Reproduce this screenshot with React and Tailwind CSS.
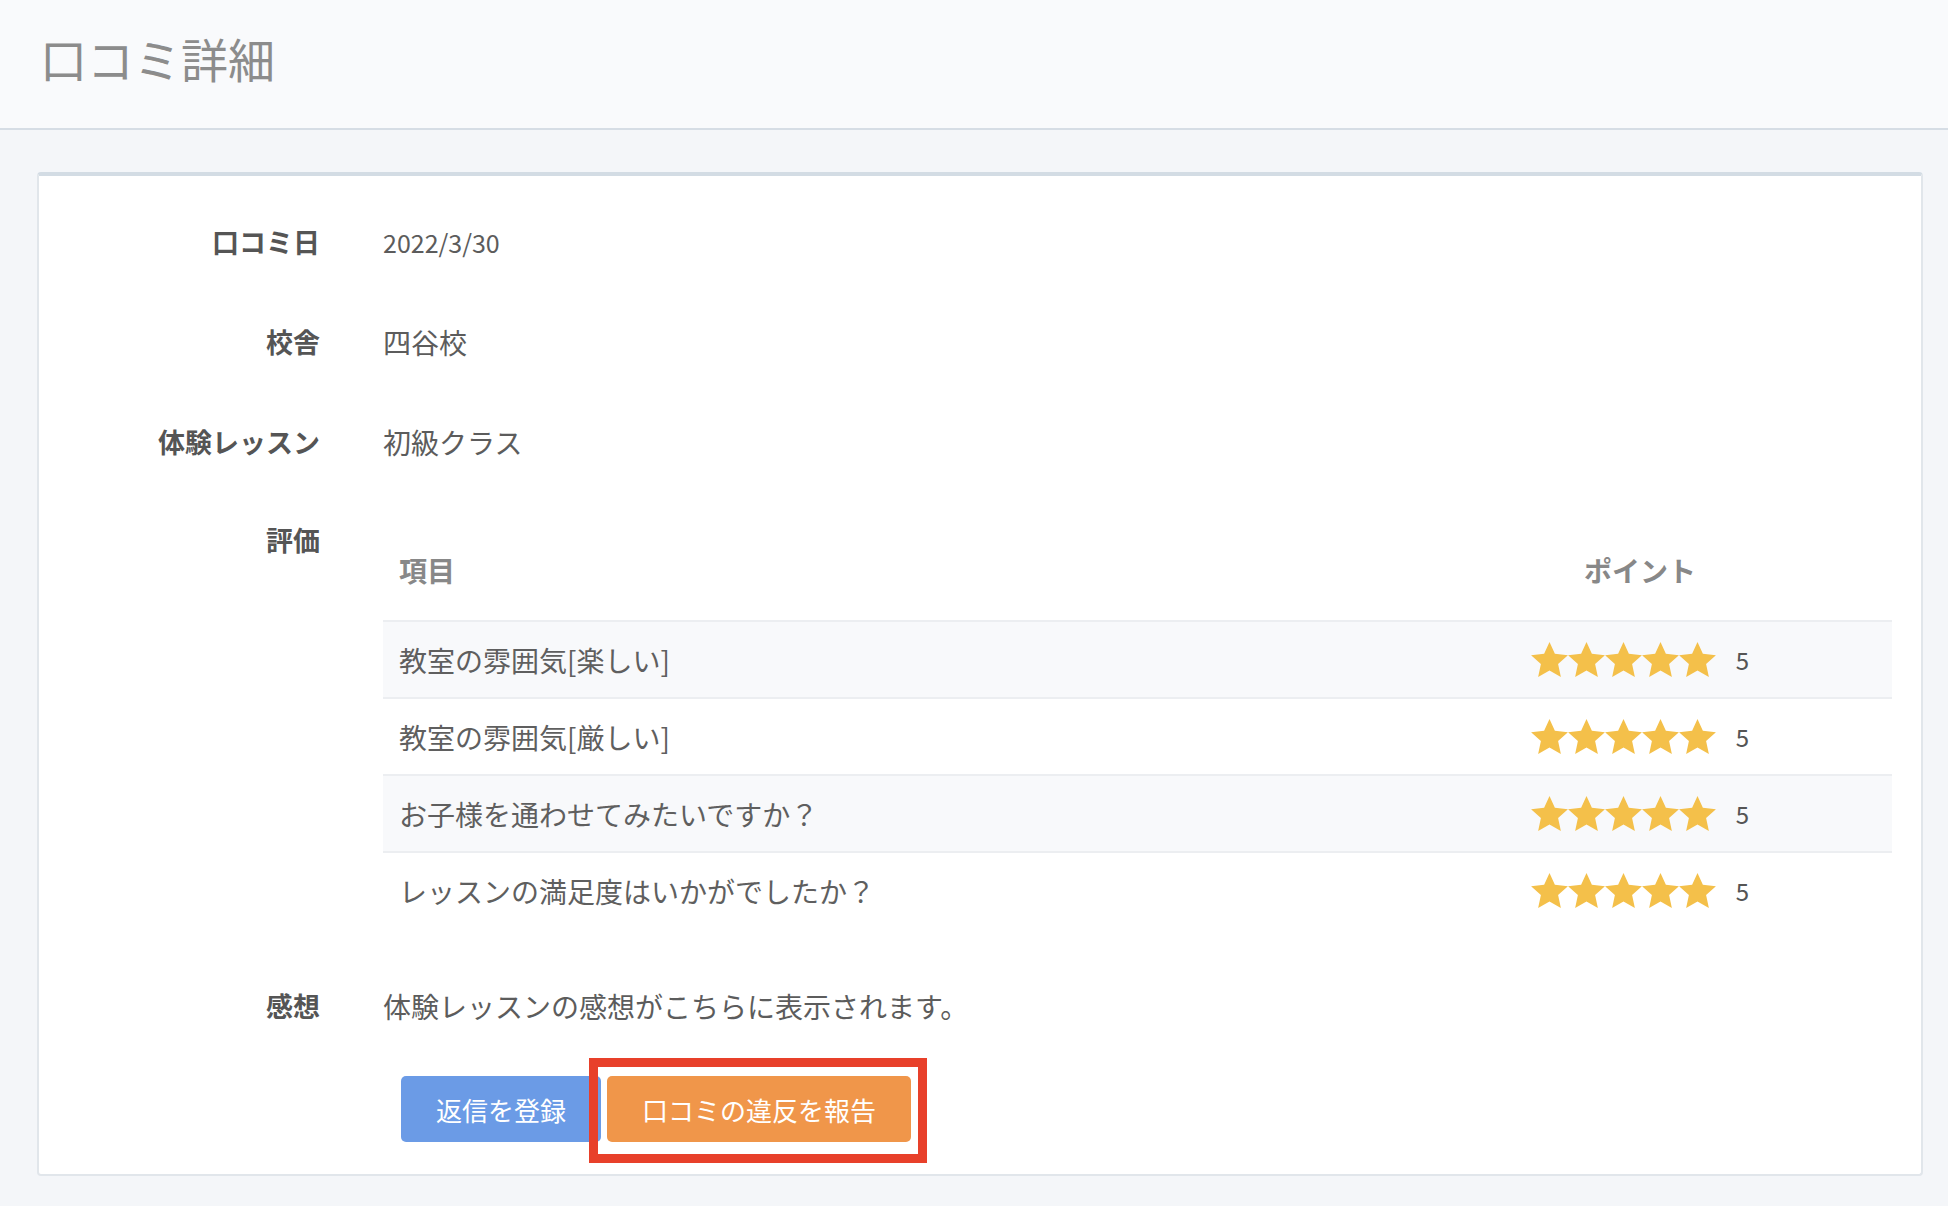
import React from "react";

const items = [
  { label: "教室の雰囲気[楽しい]", point: 5 },
  { label: "教室の雰囲気[厳しい]", point: 5 },
  { label: "お子様を通わせてみたいですか？", point: 5 },
  { label: "レッスンの満足度はいかがでしたか？", point: 5 },
];

function Star() {
  return (
    <svg width="37" height="35" viewBox="0 0 24 22.8" className="block">
      <polygon
        fill="#f4c04a"
        points="12,0 15.5,7.7 24,8.6 17.6,14.4 19.4,22.8 12,18.5 4.6,22.8 6.4,14.4 0,8.6 8.5,7.7"
      />
    </svg>
  );
}

function Row({ label, children, className = "", valueClass = "text-[28px]" }) {
  return (
    <div className={`flex ${className}`}>
      <div className="w-[281px] shrink-0 text-right text-[27px] font-bold leading-[40px] text-[#555]">
        {label}
      </div>
      <div className={`ml-[63px] flex-1 leading-[40px] text-[#5c5c5c] ${valueClass}`}>
        {children}
      </div>
    </div>
  );
}

export default function App() {
  return (
    <div className="min-h-screen bg-[#f4f6f9] pb-[33px] font-['Noto_Sans_CJK_JP','Noto_Sans',sans-serif]">
      <header className="flex h-[130px] items-center border-b-2 border-[#d6dde5] bg-[#f9fafc] pb-[14px] pl-[40px]">
        <h1 className="text-[47px] leading-none text-[#8c8c8c]">口コミ詳細</h1>
      </header>

      <div className="ml-[37px] mr-[25px] mt-[42px] rounded-[4px] border-2 border-t-4 border-[#e1e6eb] border-t-[#d3dce4] bg-white pb-[32px] pr-[29px] pt-[46px]">
        <Row label="口コミ日" valueClass="text-[25px]">
          2022/3/30
        </Row>
        <Row label="校舎" className="mt-[60px]">
          四谷校
        </Row>
        <Row label="体験レッスン" className="mt-[60px]">
          初級クラス
        </Row>

        <div className="mt-[58px] flex">
          <div className="w-[281px] shrink-0 text-right text-[27px] font-bold leading-[40px] text-[#555]">
            評価
          </div>
          <div className="ml-[63px] flex-1 text-[28px]">
            <div className="flex h-[100px] items-center font-bold text-[#888]">
              <div className="flex-1 pl-[16px]">項目</div>
              <div className="w-[504px] text-center">ポイント</div>
            </div>
            {items.map((item, i) => (
              <div
                key={item.label}
                className={`flex h-[77px] items-center border-t-2 border-[#eceef1] text-[#5f5f5f] ${
                  i % 2 === 0 ? "bg-[#f8f9fb]" : "bg-white"
                }`}
              >
                <div className="flex-1 pl-[16px]">{item.label}</div>
                <div className="flex w-[504px] items-center justify-center">
                  <div className="flex">
                    {[0, 1, 2, 3, 4].map((n) => (
                      <Star key={n} />
                    ))}
                  </div>
                  <span className="ml-[20px] text-[24px] text-[#555]">{item.point}</span>
                </div>
              </div>
            ))}
          </div>
        </div>

        <Row label="感想" className="mt-[58px]">
          体験レッスンの感想がこちらに表示されます。
        </Row>

        <div className="mt-[50px] flex gap-[6px] pl-[362px]">
          <button className="h-[66px] rounded-[5px] bg-[#6b9be6] px-[35px] text-[26px] text-white">
            返信を登録
          </button>
          <span className="relative">
            <button className="h-[66px] rounded-[5px] bg-[#f0964a] px-[35px] text-[26px] text-white">
              口コミの違反を報告
            </button>
            <span className="pointer-events-none absolute -bottom-[21px] -left-[18px] -right-[16px] -top-[18px] border-[9px] border-[#e8402a]" />
          </span>
        </div>
      </div>
    </div>
  );
}
